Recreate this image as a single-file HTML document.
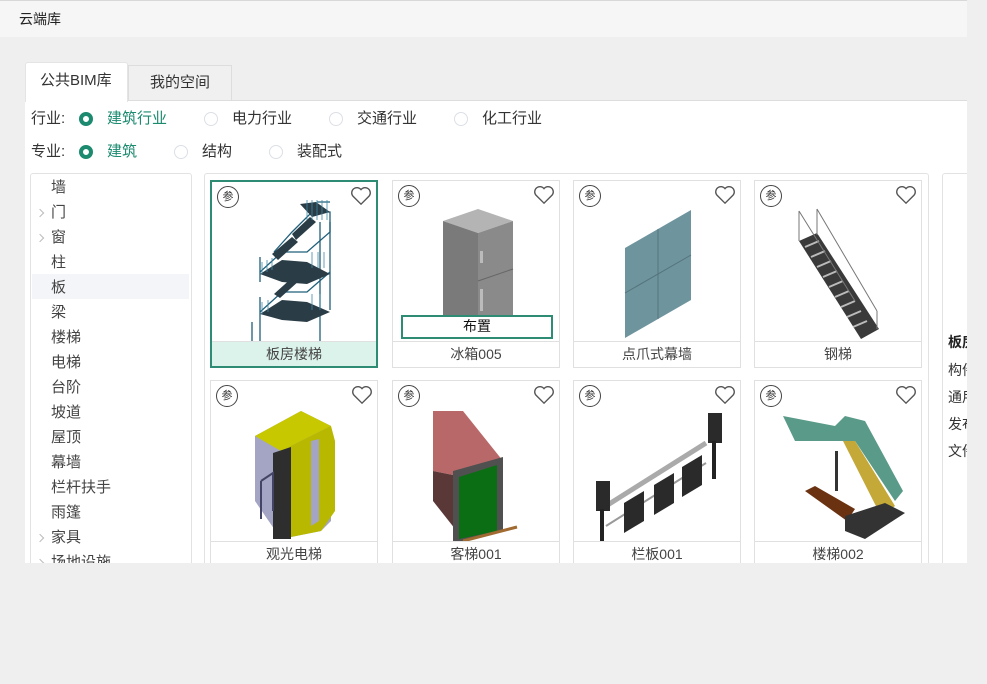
<!DOCTYPE html>
<html><head><meta charset="utf-8"><style>
*{margin:0;padding:0;box-sizing:border-box}
body{width:987px;height:684px;background:#efefef;position:relative;overflow:hidden;font-family:"Liberation Sans","Noto Sans CJK SC",sans-serif;font-size:15px;color:#333}
.a{position:absolute}
.hdr{left:0;top:0;width:967px;height:37px;background:#f6f6f6;border-top:1px solid #d8d8d8}
.t{position:absolute;white-space:nowrap;line-height:20px}
.radio{position:absolute;width:14px;height:14px;border-radius:50%;border:1px solid #dcdfe6;background:#fff}
.radio.on{border:4px solid #1b8a6f;background:#fff}
.card{position:absolute;width:168px;height:188px;border:1px solid #e0e0e0;background:#fff;overflow:hidden}
.card .nm{position:absolute;left:0;right:0;top:160px;height:28px;border-top:1px solid #e0e0e0;text-align:center;line-height:24px;font-size:14px;color:#444}
.card.sel{border:2px solid #2e8b74}
.card.sel .nm{background:#dcf3ec;top:159px}
.can{position:absolute;left:5px;top:4px;width:22px;height:22px;border:1px solid #444;border-radius:50%;font-size:11px;text-align:center;line-height:20px;color:#333}
.hrt{position:absolute;right:4px;top:4px}
.tree .t{left:20px;font-size:15px;color:#444}
.arr{position:absolute;left:6px;width:6px;height:6px;border-right:1px solid #bbb;border-top:1px solid #bbb;transform:rotate(45deg)}
</style></head><body>
<div class="a hdr"><span class="t" style="left:19px;top:8px;color:#222;font-size:14px">云端库</span></div>
<div class="a" style="left:128px;top:65px;width:104px;height:36px;background:#f0f0f0;border:1px solid #ddd"><span class="t" style="left:21px;top:7px;color:#333">我的空间</span></div>
<div class="a" style="left:25px;top:100px;width:942px;height:463px;background:#fff;border-top:1px solid #ddd"></div>
<div class="a" style="left:25px;top:62px;width:103px;height:40px;background:#fff;border:1px solid #e4e4e4;border-bottom:none;border-radius:3px 3px 0 0"><span class="t" style="left:14px;top:8px;color:#333">公共BIM库</span></div>

<span class="t" style="left:31px;top:109px">行业:</span>
<div class="radio on" style="left:79px;top:112px"></div><span class="t" style="left:107px;top:109px;color:#1b8a6f">建筑行业</span>
<div class="radio" style="left:204px;top:112px"></div><span class="t" style="left:232px;top:109px">电力行业</span>
<div class="radio" style="left:329px;top:112px"></div><span class="t" style="left:357px;top:109px">交通行业</span>
<div class="radio" style="left:454px;top:112px"></div><span class="t" style="left:482px;top:109px">化工行业</span>
<span class="t" style="left:31px;top:142px">专业:</span>
<div class="radio on" style="left:79px;top:145px"></div><span class="t" style="left:107px;top:142px;color:#1b8a6f">建筑</span>
<div class="radio" style="left:174px;top:145px"></div><span class="t" style="left:202px;top:142px">结构</span>
<div class="radio" style="left:269px;top:145px"></div><span class="t" style="left:297px;top:142px">装配式</span>

<div class="a tree" style="left:30px;top:173px;width:162px;height:400px;border:1px solid #e2e2e2;border-radius:3px;background:#fff;overflow:hidden">
<div class="a" style="left:1px;top:100px;width:157px;height:25px;background:#f4f5f9"></div>
<span class="t" style="top:4px">墙</span>
<span class="arr" style="top:36px"></span><span class="t" style="top:29px">门</span>
<span class="arr" style="top:61px"></span><span class="t" style="top:54px">窗</span>
<span class="t" style="top:79px">柱</span>
<span class="t" style="top:104px">板</span>
<span class="t" style="top:129px">梁</span>
<span class="t" style="top:154px">楼梯</span>
<span class="t" style="top:179px">电梯</span>
<span class="t" style="top:204px">台阶</span>
<span class="t" style="top:229px">坡道</span>
<span class="t" style="top:254px">屋顶</span>
<span class="t" style="top:279px">幕墙</span>
<span class="t" style="top:304px">栏杆扶手</span>
<span class="t" style="top:329px">雨篷</span>
<span class="arr" style="top:361px"></span><span class="t" style="top:354px">家具</span>
<span class="arr" style="top:386px"></span><span class="t" style="top:379px">场地设施</span>
</div>

<div class="a" style="left:204px;top:173px;width:725px;height:400px;border:1px solid #e2e2e2;border-radius:3px;background:#fff"></div>
<div class="a" style="left:942px;top:173px;width:40px;height:400px;border:1px solid #e2e2e2;border-radius:3px;background:#fff">
<span class="t" style="left:5px;top:158px;font-weight:bold;color:#222;font-size:14px">板房</span>
<span class="t" style="left:5px;top:186px;font-size:14px">构件</span>
<span class="t" style="left:5px;top:213px;font-size:14px">通用</span>
<span class="t" style="left:5px;top:240px;font-size:14px">发布</span>
<span class="t" style="left:5px;top:267px;font-size:14px">文件</span>
</div>

<div class="card sel" style="left:210px;top:180px">
<svg class="a" style="left:0;top:0" width="166" height="160"><g stroke="#1f5f7a" stroke-width="1.3" fill="none">
<path d="M48 90 L70 70 L95 70 L118 50 L118 30 L100 30 L80 50 L62 70"/><path d="M48 130 L70 110 L95 110 L118 90"/>
<line x1="108" y1="40" x2="108" y2="160"/><line x1="118" y1="40" x2="118" y2="128"/><line x1="40" y1="140" x2="40" y2="160"/><line x1="48" y1="140" x2="48" y2="160"/>
<path d="M48 75 L48 100 M48 115 L48 140 M105 20 L118 20"/></g>
<g fill="#2a3c46"><polygon points="80,52 98,35 104,40 84,58"/><polygon points="60,72 80,55 86,60 66,78"/><polygon points="48,92 70,78 95,80 118,92 95,102 70,100"/><polygon points="62,112 82,94 88,98 68,116"/><polygon points="48,132 70,118 95,120 118,130 95,140 70,138"/><polygon points="88,22 104,20 118,30 100,35"/></g>
<g stroke="#3d8aa8" stroke-width="0.8"><path d="M95 18v20 M100 18v20 M105 18v20 M110 18v20 M115 18v20 M50 80v12 M55 78v12 M60 76v12 M100 70v16 M106 70v16 M112 70v16 M50 120v12 M56 118v12 M100 112v16 M108 112v16"/></g></svg>
<div class="can">参</div><svg class="hrt" width="22" height="20" viewBox="0 0 24 22"><path d="M12 20 L3 11 A5 5 0 0 1 12 4 A5 5 0 0 1 21 11 Z" fill="none" stroke="#555" stroke-width="1.5"/></svg>
<div class="nm">板房楼梯</div></div>

<div class="card" style="left:392px;top:180px">
<svg class="a" style="left:0;top:0" width="168" height="160"><polygon points="50,40 85,28 120,40 85,52" fill="#b4b4b4"/><polygon points="50,40 85,52 85,140 50,140" fill="#7a7a7a"/><polygon points="85,52 120,40 120,140 85,140" fill="#8a8a8a"/><line x1="85" y1="100" x2="120" y2="88" stroke="#666"/><rect x="87" y="70" width="3" height="12" fill="#bbb"/><rect x="87" y="108" width="3" height="22" fill="#bbb"/></svg>
<div class="a" style="left:8px;top:134px;width:152px;height:24px;border:2px solid #2e8b74;background:#fff;text-align:center;line-height:19px;color:#111;font-size:14px">布置</div>
<div class="can">参</div><svg class="hrt" width="22" height="20" viewBox="0 0 24 22"><path d="M12 20 L3 11 A5 5 0 0 1 12 4 A5 5 0 0 1 21 11 Z" fill="none" stroke="#555" stroke-width="1.5"/></svg>
<div class="nm">冰箱005</div></div>

<div class="card" style="left:573px;top:180px">
<svg class="a" style="left:0;top:0" width="168" height="160"><polygon points="51,67 117,29 117,119 51,157" fill="#6e949e"/><line x1="84" y1="48" x2="84" y2="138" stroke="#55737c"/><line x1="51" y1="112" x2="117" y2="74" stroke="#55737c"/></svg>
<div class="can">参</div><svg class="hrt" width="22" height="20" viewBox="0 0 24 22"><path d="M12 20 L3 11 A5 5 0 0 1 12 4 A5 5 0 0 1 21 11 Z" fill="none" stroke="#555" stroke-width="1.5"/></svg>
<div class="nm">点爪式幕墙</div></div>

<div class="card" style="left:754px;top:180px">
<svg class="a" style="left:0;top:0" width="168" height="160"><polygon points="44,60 62,52 124,148 106,158" fill="#3a3a3a"/><g stroke="#bbb" stroke-width="2"><path d="M50 66l14-6M56 76l14-6M62 86l14-6M68 96l14-6M74 106l14-6M80 116l14-6M86 126l14-6M92 136l14-6M98 146l14-6"/></g><g stroke="#777" fill="none"><path d="M44 30 L100 120 M62 28 L122 130 M44 30v30 M62 28v26 M122 130v18"/></g></svg>
<div class="can">参</div><svg class="hrt" width="22" height="20" viewBox="0 0 24 22"><path d="M12 20 L3 11 A5 5 0 0 1 12 4 A5 5 0 0 1 21 11 Z" fill="none" stroke="#555" stroke-width="1.5"/></svg>
<div class="nm">钢梯</div></div>

<div class="card" style="left:210px;top:380px">
<svg class="a" style="left:0;top:0" width="168" height="160"><polygon points="44,55 90,30 120,45 120,140 110,150 70,158 44,120" fill="#a4a4c4"/><polygon points="44,55 90,30 120,45 70,70" fill="#c8c800"/><path d="M70 70 L120 45 L124 60 L124 130 L110 150 L70 158 Z" fill="#b8b800"/><polygon points="100,60 108,58 108,140 100,145" fill="#a4a4c4"/><polygon points="62,72 80,66 80,158 62,158" fill="#2e2e2e"/><path d="M50 100 L62 92 V130 M50 100 V138" stroke="#446" stroke-width="2" fill="none"/></svg>
<div class="can">参</div><svg class="hrt" width="22" height="20" viewBox="0 0 24 22"><path d="M12 20 L3 11 A5 5 0 0 1 12 4 A5 5 0 0 1 21 11 Z" fill="none" stroke="#555" stroke-width="1.5"/></svg>
<div class="nm">观光电梯</div></div>

<div class="card" style="left:392px;top:380px">
<svg class="a" style="left:0;top:0" width="168" height="160"><polygon points="40,30 70,30 110,80 70,96 40,90" fill="#b86868"/><polygon points="40,90 70,96 70,158 40,120" fill="#5a3838"/><polygon points="60,90 110,76 110,150 70,160 60,160" fill="#505050"/><polygon points="66,96 104,84 104,150 66,158" fill="#0c6e14"/><line x1="70" y1="160" x2="124" y2="146" stroke="#a06a30" stroke-width="3"/></svg>
<div class="can">参</div><svg class="hrt" width="22" height="20" viewBox="0 0 24 22"><path d="M12 20 L3 11 A5 5 0 0 1 12 4 A5 5 0 0 1 21 11 Z" fill="none" stroke="#555" stroke-width="1.5"/></svg>
<div class="nm">客梯001</div></div>

<div class="card" style="left:573px;top:380px">
<svg class="a" style="left:0;top:0" width="168" height="160"><path d="M32 125 L132 62" stroke="#aaa" stroke-width="5"/><path d="M32 145 L132 82" stroke="#999" stroke-width="2"/><polygon points="50,122 70,110 70,140 50,152" fill="#2a2a2a"/><polygon points="80,104 100,92 100,122 80,134" fill="#2a2a2a"/><polygon points="108,86 128,74 128,104 108,116" fill="#2a2a2a"/><rect x="22" y="100" width="14" height="30" fill="#2a2a2a"/><rect x="26" y="128" width="4" height="32" fill="#222"/><rect x="134" y="32" width="14" height="30" fill="#2a2a2a"/><rect x="138" y="60" width="4" height="38" fill="#222"/></svg>
<div class="can">参</div><svg class="hrt" width="22" height="20" viewBox="0 0 24 22"><path d="M12 20 L3 11 A5 5 0 0 1 12 4 A5 5 0 0 1 21 11 Z" fill="none" stroke="#555" stroke-width="1.5"/></svg>
<div class="nm">栏板001</div></div>

<div class="card" style="left:754px;top:380px">
<svg class="a" style="left:0;top:0" width="168" height="160"><polygon points="28,35 80,45 90,35 110,40 148,110 140,120 100,60 60,60 40,60" fill="#5a9a88"/><polygon points="88,60 100,60 140,125 126,135" fill="#c4a838"/><polygon points="50,110 60,105 100,128 92,140" fill="#6a3210"/><polygon points="90,135 130,122 150,132 110,158 90,150" fill="#333"/><rect x="80" y="70" width="3" height="40" fill="#333"/></svg>
<div class="can">参</div><svg class="hrt" width="22" height="20" viewBox="0 0 24 22"><path d="M12 20 L3 11 A5 5 0 0 1 12 4 A5 5 0 0 1 21 11 Z" fill="none" stroke="#555" stroke-width="1.5"/></svg>
<div class="nm">楼梯002</div></div>

<div class="a" style="left:0;top:563px;width:987px;height:121px;background:#efefef"></div>
<div class="a" style="left:967px;top:0;width:20px;height:684px;background:#efefef"></div>
</body></html>
